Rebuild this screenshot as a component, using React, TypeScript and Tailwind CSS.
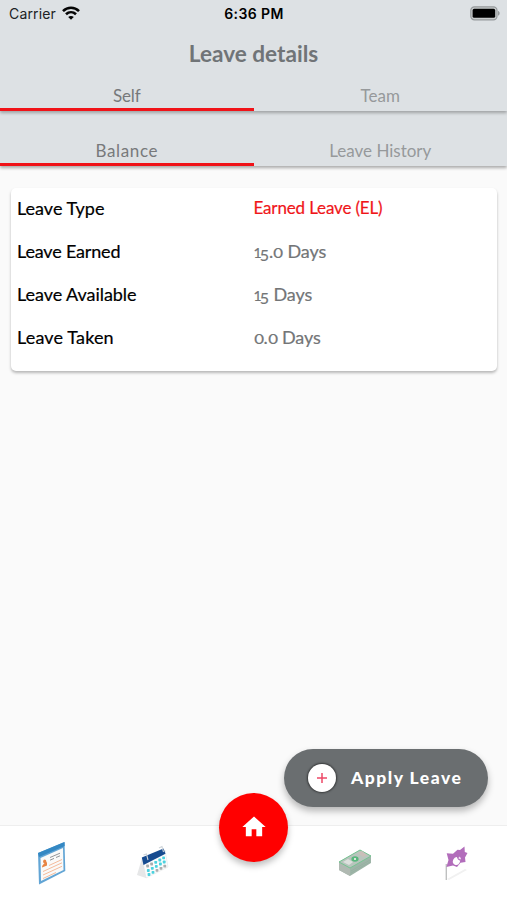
import React from 'react';

const rows = [
  { label: 'Leave Earned', value: '15.0', spacing: 'tracking-[-0.17px]' },
  { label: 'Leave Available', value: '15', spacing: 'tracking-[-0.05px]' },
  { label: 'Leave Taken', value: '0.0', spacing: 'tracking-[0.15px]' },
];

// Old-style figures: 0 and 1 sit at x-height, 5 hangs below the baseline
const Figures: React.FC<{ value: string }> = ({ value }) => (
  <span>
    {value.split('').map((char, i) => {
      if (char === '0') return <span key={i} className="inline-block scale-x-125 px-[1.1px] text-[13.5px] leading-none">0</span>;
      if (char === '1') return <span key={i} className="text-[14px] tracking-[-1.9px]">1</span>;
      if (char === '5') return <span key={i} className="relative top-[2.5px] text-[16px]">5</span>;
      return <span key={i}>{char}</span>;
    })}
  </span>
);

const StatusBar: React.FC = () => (
  <div className="grid h-[27px] grid-cols-3 items-center pl-[9px] pr-[7px] font-['Inter',sans-serif] text-[14px] text-[#202224]">
    <div className="flex items-center gap-[6px]">
      <span className="tracking-[0.15px]">Carrier</span>
      <svg className="-mt-0.5" width="18" height="14" viewBox="0 0 18 14" fill="none" stroke="#050505" strokeWidth="2.6">
        <path d="M1 5.1C5.6.6 12.4.6 17 5.1" />
        <path d="M4 8.3c2.9-2.8 7.1-2.8 10 0" />
        <path d="M9 13.8 6.2 11c1.6-1.5 4-1.5 5.6 0z" fill="#050505" stroke="none" />
      </svg>
    </div>
    <span className="pr-[1px] text-center font-semibold tracking-[0.4px] whitespace-nowrap text-black">6:36 PM</span>
    <svg className="justify-self-end" width="30" height="15" viewBox="0 0 30 15">
      <rect x="0.8" y="0.8" width="26.2" height="13" rx="3.6" fill="#c9cccd" stroke="#969a9c" strokeWidth="1.2" />
      <rect x="2.6" y="2.8" width="22.6" height="9" rx="1.6" fill="#000" />
      <path d="M28 5c2.2.7 2.2 4 0 4.7z" fill="#969a9c" />
    </svg>
  </div>
);

const Tabs: React.FC<{ active: string; other: string; spacing: string }> = ({ active, other, spacing }) => (
  <div className="grid grid-cols-2 text-center font-['Lato',sans-serif] text-[17px] leading-[24px]">
    <div className={`h-[28px] border-b-[3px] border-[#f01218] pt-px text-[#77797b] ${spacing}`}>{active}</div>
    <div className="h-[28px] pt-px text-[#96999b]">{other}</div>
  </div>
);

const ProfileIcon = () => (
  <svg className="ml-2" width="60" height="60" viewBox="0 0 60 60">
    <path d="m13 23 26.5-11 .8 29L14 54.5z" fill="#62a5d5" />
    <path d="m13 23 26.5-11 .2 4L14 27z" fill="#3488c3" />
    <path d="m15.5 28 22.500-10 .5 22L16 51z" fill="#fafaf9" />
    <ellipse cx="19.7" cy="31.5" rx="1.6" ry="2" fill="#e88443" />
    <path d="M17 37.5q0-3.500 5-5.500v3.500z" fill="#e88443" />
    <path d="m25 27.5 10-4.300m-10 7 4-1.800m2-.9 4-1.700" stroke="#85898e" strokeWidth=".9" />
    <path d="m24 35.5 13-6M18 41.5l19-8.700M18 45l19-8.700M18 48.5l13-6" stroke="#f5bb9b" strokeWidth="1" />
  </svg>
);

const dots = [
  [22.6, 36, '#a9adaf'], [26.6, 34, '#a9adaf'], [30.7, 32.3, '#4bd2df'], [34.8, 30, '#4bd2df'], [38.6, 27.8, '#4bd2df'],
  [23.3, 40.5, '#4bd2df'], [27.3, 38.3, '#4bd2df'], [31.3, 36.4, '#4bd2df'], [35.4, 34, '#4bd2df'], [39.2, 32, '#4bd2df'],
  [24, 44.5, '#4bd2df'], [28, 42.4, '#4bd2df'], [32, 40.4, '#a9adaf'], [36, 38.3, '#a9adaf'], [39.8, 36.2, '#a9adaf'],
] as const;

const CalendarIcon = () => (
  <svg className="ml-1.5" width="60" height="60" viewBox="0 0 60 60">
    <path d="m17 28-5 17 9 3 2-3-5-13z" fill="#e6e7e8" />
    <path d="m17.5 30 22.500-10 3 17-22 11z" fill="#fcfcfc" stroke="#dde0e2" strokeWidth=".5" />
    <path d="M16.8 27.5 38.5 18.500l2 5.200L18.5 35z" fill="#164b90" />
    <path d="m18.5 25 3-1 1.500 6m11-12 3-1.500 1.500 5.500" fill="none" stroke="#ced4d9" strokeWidth="1.1" />
    {dots.map(([x, y, color]) => (
      <rect key={`${x}-${y}`} x={x - 1.4} y={y - 1.4} width="2.8" height="2.8" rx=".7" fill={color} />
    ))}
  </svg>
);

const CashIcon = () => (
  <svg width="60" height="60" viewBox="0 0 60 60">
    <path d="m14 32 21-12 11 6v7L25 46l-11-6z" fill="#9eb5a8" />
    <path d="m14 32 11 6v8l-11-6z" fill="#b0b9b2" />
    <path d="m14 32 21-12 11 6-21 12z" fill="#b8c5bd" stroke="#77c493" strokeWidth="1" />
    <path d="m18 32 5-3 5 3-4 3z" fill="#dde0dd" />
    <path d="m33 23 4-2 5 4-4 2z" fill="#c9bfb9" />
    <ellipse cx="30" cy="29" rx="3.6" ry="2.7" fill="#58b87d" />
    <path d="M29 28h2v2h-2z" fill="#d7e4da" />
    <path d="m26 41 19-11M26 43l19-11" stroke="#91ac9d" strokeWidth=".5" />
  </svg>
);

const HolidayIcon = () => (
  <svg className="-ml-0.5" width="60" height="60" viewBox="0 0 60 60">
    <path d="m22 49 18-10 2 1-18 10z" fill="#f1f1f1" />
    <path d="M21.3 34v16" stroke="#bfc0c0" strokeWidth="1.4" />
    <path d="M21.7 23.3 28 23.8l4.500-4 2.500.2 4.500-3.500.3 5.500 2.700 1-2.500 4.500.5 4.500-5 .8-3.500 4.200-4-1.500-6.600 1.500L23.500 30z" fill="#b26dbb" />
    <ellipse cx="31.5" cy="31" rx="3.500" ry="4" transform="rotate(25 31.5 31)" fill="#fff" />
    <path d="m31.5 26.5 1.500 3 2.500 1.500.5-4z" fill="#b26dbb" />
    <path d="m34 26.500 2 1.500-.5 1.500-2-1z" fill="#f3e4f5" />
  </svg>
);

export default function App() {
  return (
    <div className="flex h-[900px] w-full flex-col overflow-hidden bg-[#fafafa] font-['Lato',sans-serif]">
      <header className="z-10 h-[166px] shrink-0 bg-[#dde1e4] shadow-[0_2px_3px_rgba(0,0,0,0.32)]">
        <div className="h-[111px] shadow-[0_2px_3px_rgba(0,0,0,0.28)]">
          <StatusBar />
          <h1 className="h-[56px] pt-[11px] text-center text-[22.6px] leading-[32px] font-bold text-[#707477]">Leave details</h1>
          <Tabs active="Self" other="Team" spacing="tracking-[-0.1px]" />
        </div>
        <div className="pt-[27px]">
          <Tabs active="Balance" other="Leave History" spacing="tracking-[0.65px]" />
        </div>
      </header>

      <main className="flex grow flex-col">
        <section className="mx-[10.5px] mt-[22px] h-[183px] rounded-[5px] bg-white text-[18px] leading-[41px] text-black shadow-[0_2px_3px_rgba(0,0,0,0.27)] [-webkit-text-stroke:0.2px]">
          <div className="grid h-[43px] grid-cols-[236.5px_1fr] pl-[6.5px]">
            <span>Leave Type</span>
            <span className="text-[17px] leading-[40px] tracking-[-0.15px] text-[#f01519]">Earned Leave (EL)</span>
          </div>
          {rows.map((row) => (
            <div key={row.label} className="grid h-[43px] grid-cols-[236.5px_1fr] pl-[6.5px]">
              <span className={row.spacing}>{row.label}</span>
              <span className="tracking-[-0.1px] text-[#737577]"><Figures value={row.value} /> Days</span>
            </div>
          ))}
        </section>
        <button className="mt-auto mr-[19.5px] mb-[18px] flex h-[58px] w-[203.5px] items-center self-end rounded-full bg-[#6a6e70] pl-[24px] text-white shadow-[0_4px_7px_rgba(0,0,0,0.28)]">
          <span className="flex size-7 items-center justify-center rounded-full bg-white shadow-[0_0_2px_1px_rgba(0,0,0,0.5)]">
            <svg width="12" height="12" viewBox="0 0 12 12" stroke="#ed4867" strokeWidth="1.5"><path d="M6 1v10M1 6h10" /></svg>
          </span>
          <span className="ml-[15px] text-[17.5px] font-black tracking-[1.48px] whitespace-nowrap">Apply Leave</span>
        </button>
      </main>

      <nav className="grid h-[75px] shrink-0 grid-cols-5 justify-items-center border-t border-[#eeeeee] bg-white pt-1">
        <ProfileIcon />
        <CalendarIcon />
        <button aria-label="Home" className="-mt-[37px] flex size-[69px] items-center justify-center rounded-full bg-[#ff0000] shadow-[0_4px_6px_rgba(0,0,0,0.25)]">
          <svg className="-mt-0.5 ml-px" width="28" height="28" viewBox="0 0 24 24" fill="#fff"><path d="M10 20v-6h4v6h5v-8h3L12 3 2 12h3v8z" /></svg>
        </button>
        <CashIcon />
        <HolidayIcon />
      </nav>
    </div>
  );
}
